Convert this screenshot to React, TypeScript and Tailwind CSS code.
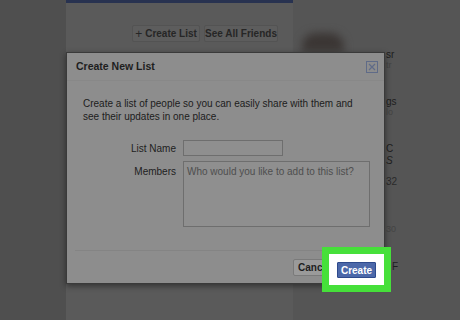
export default function App() {
  return (
    <div
      className="relative flex h-[320px] w-[460px] overflow-hidden bg-[#4e4e4e] text-[#1c1c1c]"
      style={{ fontFamily: '"Liberation Sans", Arial, sans-serif' }}
    >
      {/* left gutter */}
      <div className="w-[66px] shrink-0 bg-[#4f4f4f]" />

      {/* main column */}
      <div className="flex w-[227px] shrink-0 flex-col bg-[#5a5a5a]">
        <div className="h-[3px] bg-[#283250]" />
        <div className="flex justify-end gap-[4px] pr-[15px] pt-[22px]">
          <button className="flex h-[17px] w-[68px] items-center justify-center gap-[3px] rounded-[2px] border border-[#535353] bg-[#5d5d5d] text-[10px] font-bold text-[#262626]">
            <span className="text-[12px] font-normal leading-none">+</span>
            Create List
          </button>
          <button className="flex h-[17px] w-[74px] items-center justify-center rounded-[2px] border border-[#535353] bg-[#5d5d5d] text-[10px] font-bold text-[#262626]">
            See All Friends
          </button>
        </div>
      </div>

      {/* right column */}
      <div className="flex flex-1 flex-col bg-[#555555] pl-[93px]">
        <div className="ml-[-84px] mt-[33px] h-[19px] w-[42px] rounded-t-[14px] bg-[#3b3634] blur-[4px]" />
        <div className="mt-[-2px] text-[10px] leading-[10px] text-[#1e1e1e]">sr</div>
        <div className="text-[9px] leading-[10px] text-[#444]">tr</div>
        <div className="mt-[27px] text-[10px] leading-[10px] text-[#1e1e1e]">gs</div>
        <div className="text-[9px] leading-[10px] text-[#444]">lo</div>
        <div className="mt-[26px] text-[10px] leading-[12px] text-[#1e1e1e]">C</div>
        <div className="text-[10px] italic leading-[12px] text-[#1e1e1e]">S</div>
        <div className="mt-[9px] text-[10px] leading-[12px] text-[#2a2a2a]">32</div>
        <div className="mt-[36px] text-[9px] leading-[10px] text-[#444]">30</div>
        <div className="ml-[6px] mt-[28px] text-[10px] leading-[10px] text-[#1e1e1e]">F</div>
      </div>

      {/* dialog */}
      <div className="absolute left-[66px] top-[52px] flex h-[232px] w-[319px] flex-col border border-[#3a3a3a] bg-[#8d8d8d] shadow-[0_2px_6px_rgba(0,0,0,0.45)]">
        <div className="flex h-[28px] items-center justify-between border-b border-[#888] pl-[9px] pr-[6px]">
          <span className="text-[10.5px] font-bold text-[#1e1e1e]">Create New List</span>
          <span className="flex h-[12px] w-[12px] items-center justify-center border border-[#5f6b88] text-[#5f6b88]">
            <svg width="8" height="8" viewBox="0 0 8 8">
              <path d="M1 1 L7 7 M7 1 L1 7" stroke="currentColor" strokeWidth="1.2" />
            </svg>
          </span>
        </div>

        <p className="whitespace-nowrap pl-[16px] pt-[16px] text-[10px] leading-[13px] text-[#1c1c1c]">
          Create a list of people so you can easily share with them and
          <br />
          see their updates in one place.
        </p>

        <div className="mt-[17px] grid grid-cols-[109px_1fr] gap-x-[7px] gap-y-[5px] text-[10px]">
          <label className="flex h-[16px] items-center justify-end text-[#1e1e1e]">List Name</label>
          <div className="h-[16px] w-[100px] border border-[#6e6e6e] bg-[#8f8f8f]" />
          <label className="justify-self-end pt-[3px] text-[#1e1e1e]">Members</label>
          <div className="h-[66px] w-[187px] border border-[#6e6e6e] bg-[#8f8f8f] px-[3px] pt-[2px] text-[10px] text-[#4e4e4e]">
            Who would you like to add to this list?
          </div>
        </div>

        <div className="ml-[8px] mt-auto border-t border-[#848484]" />
        <div className="flex h-[32px] items-center justify-end gap-[4px] pr-[7px]">
          <button className="h-[17px] w-[41px] rounded-[2px] border border-[#7a7a7a] bg-[#9a9a9a] pl-[4px] text-left text-[10px] font-bold text-[#1e1e1e]">
            Cancel
          </button>
          <div className="h-[17px] w-[39px]" />
        </div>
      </div>

      {/* highlight */}
      <div className="absolute left-[322px] top-[247px] flex h-[45px] w-[69px] items-center justify-center border-[7px] border-[#46e03a] bg-white">
        <button className="h-[16px] w-[39px] rounded-[1px] border border-[#2e4a8c] bg-[#4c68a9] text-[10px] font-bold text-white">
          Create
        </button>
      </div>
    </div>
  );
}
